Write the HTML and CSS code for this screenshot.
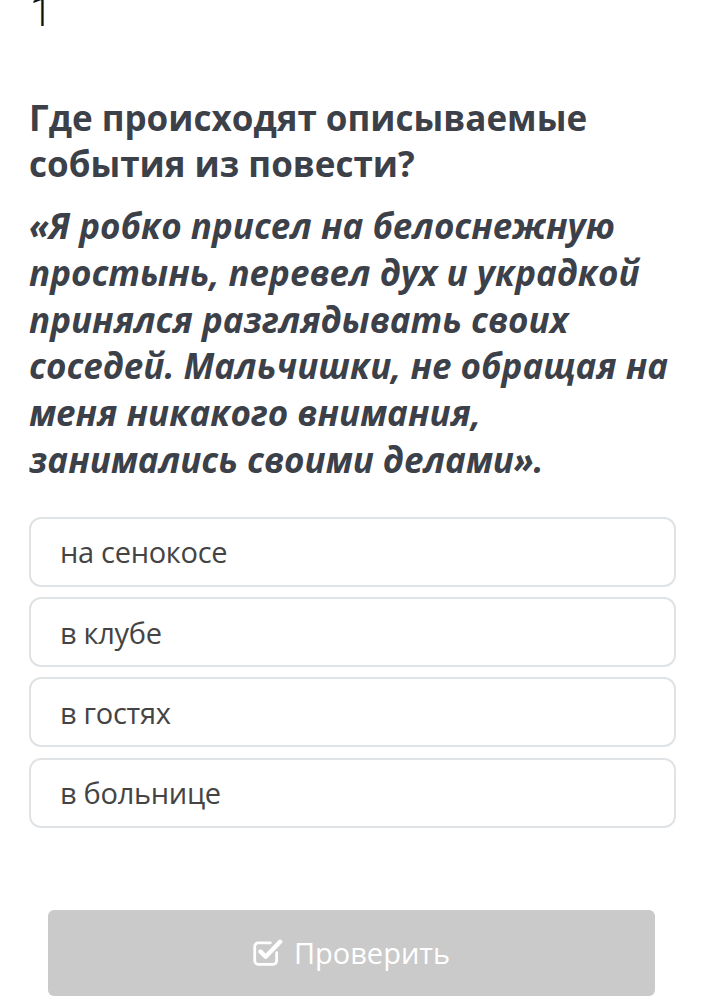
FILE: index.html
```html
<!DOCTYPE html>
<html lang="ru">
<head>
<meta charset="utf-8">
<link rel="stylesheet" href="styles.css">
</head>
<body>
<div class="page">
  <div class="num">1</div>
  <h1 class="question">Где происходят описываемые события из повести?</h1>
  <p class="quote">«Я робко присел на белоснежную простынь, перевел дух и украдкой принялся разглядывать своих соседей. Мальчишки, не обращая на меня никакого внимания, занимались своими делами».</p>
  <div class="options">
    <div class="option">на сенокосе</div>
    <div class="option">в клубе</div>
    <div class="option">в гостях</div>
    <div class="option">в больнице</div>
  </div>
  <div class="actions">
    <button class="check">
      <svg class="check-icon" viewBox="0 0 26 26" width="30" height="30">
        <path d="M20.5 14.5v7a3 3 0 0 1-3 3H4.5a3 3 0 0 1-3-3V9a3 3 0 0 1 3-3H15" fill="none" stroke="#fff" stroke-width="2.4" stroke-linecap="round"/>
        <path d="M6.5 13.5l4.5 4.5L23.5 5" fill="none" stroke="#fff" stroke-width="3.8" stroke-linecap="round" stroke-linejoin="round"/>
      </svg>
      <span>Проверить</span>
    </button>
  </div>
</div>
</body>
</html>
```

FILE: styles.css
```css
html, body {
  margin: 0;
  padding: 0;
  background: #fff;
}
.page {
  padding: 0 36px 0 29px;
  font-family: "Open Sans", "Noto Sans", sans-serif;
  color: #3c4049;
}
.num {
  font-family: Roboto, sans-serif;
  font-weight: 300;
  font-size: 40px;
  line-height: 40px;
  color: #111;
  margin-top: -7px;
  padding-left: 1px;
}
.question {
  margin: 62px 0 0 0;
  font-size: 35px;
  line-height: 46px;
  font-weight: 700;
}
.quote {
  margin: 16px 0 0 0;
  font-size: 35px;
  line-height: 46.8px;
  font-weight: 700;
  font-style: italic;
}
.options {
  margin-top: 33px;
  display: flex;
  flex-direction: column;
  gap: 10.3px;
}
.option {
  box-sizing: border-box;
  height: 70px;
  border: 2px solid #e0e3e5;
  border-radius: 12px;
  display: flex;
  align-items: center;
  padding-left: 29px;
  font-size: 29px;
  color: #444;
  letter-spacing: -0.3px;
}
.actions {
  margin-top: 82px;
  padding: 0 21px 0 19px;
}
.check {
  width: 100%;
  height: 86px;
  border: none;
  border-radius: 6px;
  background: #cacaca;
  color: #fff;
  font-family: "Open Sans", sans-serif;
  font-size: 29px;
  display: flex;
  align-items: center;
  justify-content: center;
  gap: 11px;
  padding: 0;
}
.check-icon {
  display: block;
  margin-top: -3px;
}
```
